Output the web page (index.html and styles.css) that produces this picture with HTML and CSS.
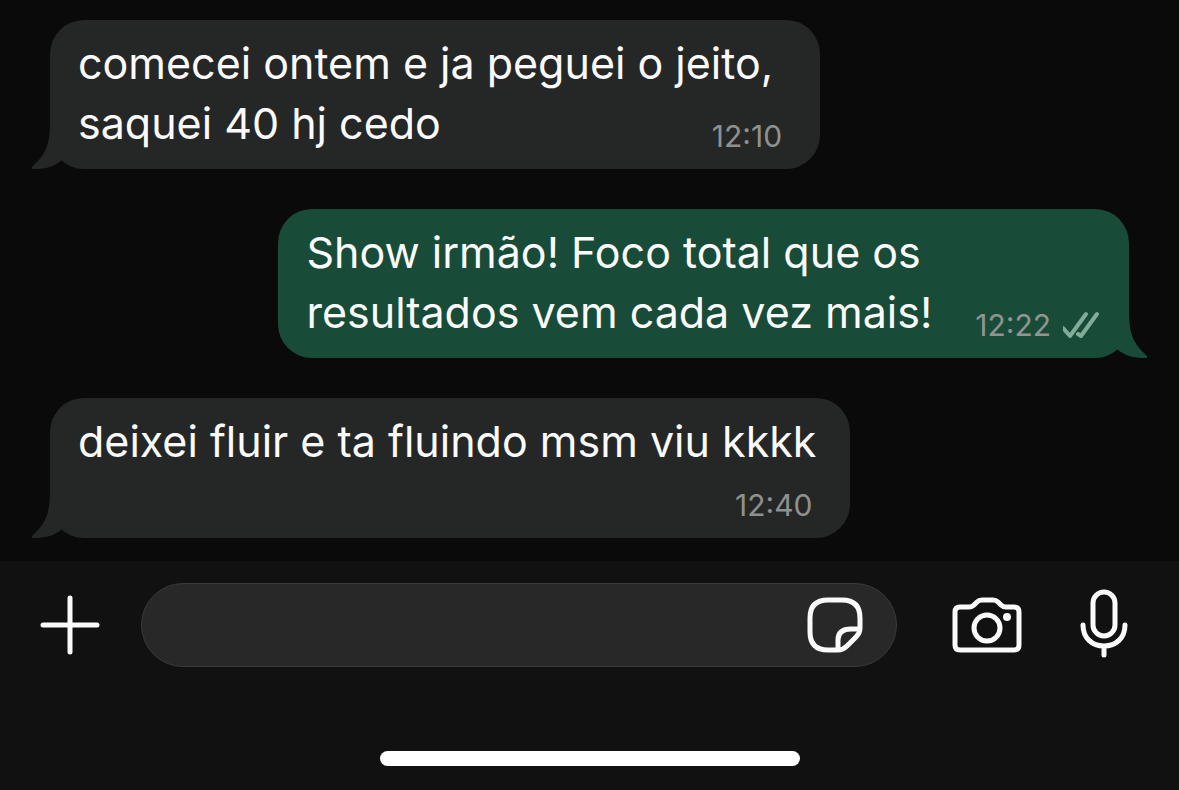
FILE: index.html
```html
<!DOCTYPE html>
<html lang="pt-BR">
<head>
	<title>Chat</title>
	<meta charset="utf-8" />
	<meta name="viewport" content="width=device-width, initial-scale=1" />
	<link rel="stylesheet" href="styles.css">
</head>
<body>
	<main class="chat">
		<div class="bubble received">
			<svg class="tail" viewBox="0 0 40 48" aria-hidden="true"><path d="M18 0C18 24 14 33 0 46Q-1 48 2 48C14 48 21 46 29 40L40 30V0Z" /></svg>
			comecei ontem e ja peguei o jeito,<br>
			saquei 40 hj cedo
			<span class="meta"><time>12:10</time></span>
		</div>
		<div class="bubble sent">
			<svg class="tail" viewBox="0 0 40 48" aria-hidden="true"><path d="M22 0C22 24 26 33 40 46Q41 48 38 48C26 48 19 46 11 40L0 30V0Z" /></svg>
			Show irmão! Foco total que os<br>
			resultados vem cada vez mais!
			<span class="meta">
				<time>12:22</time>
				<svg class="ticks" viewBox="0 0 36 28" aria-hidden="true"><path d="M0 17l7 8L23 3M15 23l3 2L34 3" /></svg>
			</span>
		</div>
		<div class="bubble received stacked">
			<svg class="tail" viewBox="0 0 40 48" aria-hidden="true"><path d="M18 0C18 24 14 33 0 46Q-1 48 2 48C14 48 21 46 29 40L40 30V0Z" /></svg>
			deixei fluir e ta fluindo msm viu kkkk
			<span class="meta"><time>12:40</time></span>
		</div>
	</main>

	<footer class="footer">
		<form class="composer">
			<button class="icon-button" type="button" aria-label="Anexar">
				<svg class="icon-plus" viewBox="0 0 60 60"><path d="M30 3v54M3 30h54" /></svg>
			</button>
			<div class="field">
				<input class="field-input" type="text" aria-label="Mensagem">
				<button class="icon-button" type="button" aria-label="Figurinhas">
					<svg class="icon-sticker" viewBox="0 0 56 56">
						<path d="M21 3h14q18 0 18 18v10c0 4-1 6-4 9l-9 9c-3 3-5 4-9 4H21Q3 53 3 35V21Q3 3 21 3Z" />
						<path d="M52 32H44Q31 32 31 43V52" />
					</svg>
				</button>
			</div>
			<button class="icon-button camera" type="button" aria-label="Câmera">
				<svg class="icon-camera" viewBox="0 0 70 56">
					<path d="M8 10h9q3 0 5-2l3-3q2-2 5-2h11q3 0 5 2l3 3q2 2 5 2h8q5 0 5 5v33q0 5-5 5H8q-5 0-5-5V15q0-5 5-5Z" />
					<circle cx="35" cy="31" r="13" />
					<circle class="dot" cx="55" cy="20" r="4" />
				</svg>
			</button>
			<button class="icon-button mic" type="button" aria-label="Gravar áudio">
				<svg class="icon-mic" viewBox="0 0 48 70">
					<rect x="13" y="2" width="22" height="44" rx="11" />
					<path d="M3 35c0 13 9 21 21 21s21-8 21-21M24 56v9" />
				</svg>
			</button>
		</form>
		<div class="home-indicator"></div>
	</footer>
</body>
</html>
```
FILE: styles.css
```css
* {
	box-sizing: border-box;
}
body {
	display: flex;
	flex-direction: column;
	min-height: 100vh;
	margin: 0;
	color: #fafafa;
	background-color: #0a0a0a;
	font-family: Inter, "Liberation Sans", sans-serif;
	font-size: 43px;
	line-height: 60px;
}

/* Messages */
.chat {
	display: flex;
	flex: 1;
	flex-direction: column;
	justify-content: flex-end;
	gap: 40px;
	padding: 20px 50px 23px;
}
.bubble {
	position: relative;
	max-width: 100%;
	padding: 13px 30px 15px 28px;
	border-radius: 34px;
}
.received {
	align-self: flex-start;
	padding-right: 47px;
	background-color: #252726;
}
.sent {
	align-self: flex-end;
	background-color: #184c38;
}
.tail {
	position: absolute;
	bottom: 0;
	width: 40px;
	height: 48px;
}
.received .tail {
	left: -18px;
	fill: #252726;
}
.sent .tail {
	right: -18px;
	fill: #184c38;
}
.meta {
	display: flex;
	float: right;
	align-items: center;
	gap: 12px;
	margin: 25px -9px 0 0;
	color: #8f9190;
	font-size: 30px;
	line-height: 36px;
}
.sent .meta {
	margin-right: 0;
	margin-left: 43px;
	color: #919493;
}
.stacked {
	padding-right: 34px;
}
.stacked .meta {
	float: none;
	justify-content: flex-end;
	margin: 16px 4px 0 0;
}
.ticks {
	width: 36px;
	height: 28px;
	fill: none;
	stroke: #83ab99;
	stroke-width: 4;
	stroke-linecap: round;
	stroke-linejoin: round;
}

/* Bottom bar */
.footer {
	padding: 22px 0 24px;
	background-color: #111111;
}
.composer {
	display: flex;
	align-items: center;
	margin: 0;
	padding: 0 51px 0 40px;
}
.icon-button {
	flex: none;
	padding: 0;
	border: 0;
	background: none;
	line-height: 0;
	cursor: pointer;
}
.icon-button svg {
	fill: none;
	stroke: #fafafa;
	stroke-width: 5;
	stroke-linecap: round;
	stroke-linejoin: round;
}
.icon-button .dot {
	fill: #fafafa;
	stroke: none;
}
.icon-plus {
	width: 60px;
	height: 60px;
}
.icon-sticker {
	width: 56px;
	height: 56px;
}
.icon-camera {
	width: 70px;
	height: 56px;
}
.icon-mic {
	width: 48px;
	height: 70px;
	overflow: visible;
}
.field {
	display: flex;
	flex: 1;
	align-items: center;
	min-width: 0;
	height: 84px;
	margin: 0 55px 0 41px;
	padding: 0 33px;
	border: 1px solid #3a3a3a;
	border-radius: 42px;
	background-color: #282828;
}
.field-input {
	flex: 1;
	min-width: 0;
	padding: 0;
	border: 0;
	outline: 0;
	color: inherit;
	background: none;
	font: inherit;
}
.mic {
	margin-left: 58px;
}
.home-indicator {
	width: 420px;
	max-width: 100%;
	height: 15px;
	margin: 84px auto 0;
	border-radius: 8px;
	background-color: #ffffff;
}
```
